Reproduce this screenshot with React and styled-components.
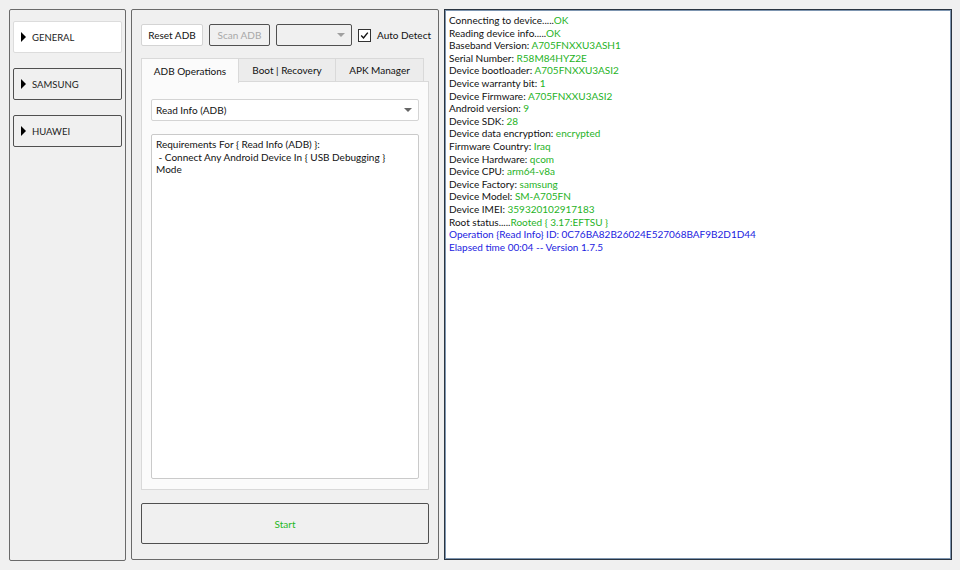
import React from "react";
import styled, { createGlobalStyle } from "styled-components";

const Global = createGlobalStyle`
  html, body { margin: 0; padding: 0; background: #f0f0f0; }
  body { font-family: Lato, "Noto Sans", sans-serif; font-size: 10px; color: #000; }
  * { box-sizing: border-box; }
`;

const Window = styled.div`
  width: 960px;
  height: 570px;
  padding: 9px;
  display: flex;
  gap: 5px;
  background: #f0f0f0;
`;

const SidePanel = styled.div`
  width: 117px;
  flex-shrink: 0;
  height: 552px;
  border: 1px solid #6a6a6a;
  border-radius: 2px;
  padding: 11px 3px 0 3px;
  display: flex;
  flex-direction: column;
  gap: 15px;
`;

const NavButton = styled.div`
  height: 32px;
  display: flex;
  align-items: center;
  gap: 6px;
  padding-left: 7px;
  border-radius: 2px;
  border: 1px solid ${(p) => (p.$active ? "#dcdcdc" : "#505050")};
  background: ${(p) => (p.$active ? "#ffffff" : "#f0f0f0")};
  font-size: 9.5px;
  color: #222;
`;

const Tri = styled.span`
  width: 0;
  height: 0;
  border-top: 5px solid transparent;
  border-bottom: 5px solid transparent;
  border-left: 5px solid #000;
`;

const MidPanel = styled.div`
  width: 308px;
  flex-shrink: 0;
  height: 551px;
  border: 1px solid #6a6a6a;
  border-radius: 2px;
  padding: 14px 9px 0 9px;
  display: flex;
  flex-direction: column;
`;

const Toolbar = styled.div`
  display: flex;
  align-items: center;
  gap: 6px;
  height: 22px;
`;

const ToolButton = styled.div`
  height: 22px;
  width: ${(p) => p.$w}px;
  flex-shrink: 0;
  display: flex;
  align-items: center;
  justify-content: center;
  border-radius: 2px;
  border: 1px solid ${(p) => (p.$disabled ? "#505050" : "#d4d4d4")};
  background: ${(p) => (p.$disabled ? "#f0f0f0" : "#ffffff")};
  color: ${(p) => (p.$disabled ? "#a8a8a8" : "#111")};
  white-space: nowrap;
`;

const Combo = styled.div`
  width: 76px;
  flex-shrink: 0;
  height: 22px;
  border: 1px solid #505050;
  border-radius: 2px;
  display: flex;
  align-items: center;
  justify-content: flex-end;
  padding-right: 6px;
`;

const Arrow = styled.span`
  width: 0;
  height: 0;
  border-left: 4px solid transparent;
  border-right: 4px solid transparent;
  border-top: 4px solid ${(p) => p.$c || "#666"};
`;

const Check = styled.label`
  display: flex;
  align-items: center;
  gap: 6px;
  color: #111;
  white-space: nowrap;
`;

const Box = styled.span`
  width: 13px;
  height: 13px;
  border: 1px solid #333;
  background: #fff;
  display: flex;
  align-items: center;
  justify-content: center;
`;

const Tabs = styled.div`
  display: flex;
  margin-top: 12px;
  height: 24px;
  position: relative;
  z-index: 1;
`;

const Tab = styled.div`
  width: ${(p) => p.$w}px;
  height: ${(p) => (p.$active ? 25 : 24)}px;
  display: flex;
  align-items: center;
  justify-content: center;
  border: 1px solid #d9d9d9;
  border-bottom: ${(p) => (p.$active ? "none" : "1px solid #d9d9d9")};
  margin-left: ${(p) => (p.$first ? 0 : -1)}px;
  background: ${(p) => (p.$active ? "#fbfbfb" : "#ececec")};
  color: #111;
  white-space: nowrap;
`;

const Pane = styled.div`
  width: 288px;
  height: 409px;
  margin-top: -1px;
  border: 1px solid #d9d9d9;
  background: #fbfbfb;
  padding: 17px 9px 10px 9px;
  display: flex;
  flex-direction: column;
  gap: 13px;
`;

const Select = styled.div`
  height: 22px;
  border: 1px solid #d4d4d4;
  border-radius: 2px;
  background: #fff;
  display: flex;
  align-items: center;
  justify-content: space-between;
  padding: 0 6px 0 4px;
  color: #111;
`;

const TextArea = styled.div`
  flex: 1;
  border: 1px solid #cacaca;
  border-radius: 2px;
  background: #fff;
  padding: 3px 4px;
  line-height: 12.6px;
  color: #111;
  white-space: pre-wrap;
`;

const StartButton = styled.div`
  margin-top: 13px;
  height: 41px;
  border: 1px solid #505050;
  border-radius: 2px;
  background: #f0f0f0;
  display: flex;
  align-items: center;
  justify-content: center;
  color: #1fb81f;
`;

const Log = styled.div`
  width: 508px;
  flex-shrink: 0;
  height: 551px;
  border: 1px solid #2a3440;
  box-shadow: inset 0 0 0 1px #7d95b0;
  background: #fff;
  padding: 4px 4px;
  line-height: 12.6px;
`;

const Line = styled.div`
  white-space: nowrap;
  color: ${(p) => (p.$blue ? "#1b1be0" : "#111")};
`;

const Val = styled.span`
  color: #1fb31f;
`;

const lines = [
  ["Connecting to device.....", "OK"],
  ["Reading device info.....", "OK"],
  ["Baseband Version: ", "A705FNXXU3ASH1"],
  ["Serial Number: ", "R58M84HYZ2E"],
  ["Device bootloader: ", "A705FNXXU3ASI2"],
  ["Device warranty bit: ", "1"],
  ["Device Firmware: ", "A705FNXXU3ASI2"],
  ["Android version: ", "9"],
  ["Device SDK: ", "28"],
  ["Device data encryption: ", "encrypted"],
  ["Firmware Country: ", "Iraq"],
  ["Device Hardware: ", "qcom"],
  ["Device CPU: ", "arm64-v8a"],
  ["Device Factory: ", "samsung"],
  ["Device Model: ", "SM-A705FN"],
  ["Device IMEI: ", "359320102917183"],
  ["Root status.....", "Rooted { 3.17:EFTSU }"],
];

export default function App() {
  return (
    <>
      <Global />
      <Window>
        <SidePanel>
          <NavButton $active><Tri />GENERAL</NavButton>
          <NavButton><Tri />SAMSUNG</NavButton>
          <NavButton><Tri />HUAWEI</NavButton>
        </SidePanel>
        <MidPanel>
          <Toolbar>
            <ToolButton $w={62}>Reset ADB</ToolButton>
            <ToolButton $w={61} $disabled>Scan ADB</ToolButton>
            <Combo><Arrow $c="#a0a0a0" /></Combo>
            <Check>
              <Box>
                <svg width="9" height="9" viewBox="0 0 9 9">
                  <path d="M1.2 4.6 L3.5 7 L7.8 1.6" fill="none" stroke="#111" strokeWidth="1.4" />
                </svg>
              </Box>
              Auto Detect
            </Check>
          </Toolbar>
          <Tabs>
            <Tab $w={98} $active $first>ADB Operations</Tab>
            <Tab $w={98}>Boot | Recovery</Tab>
            <Tab $w={89}>APK Manager</Tab>
          </Tabs>
          <Pane>
            <Select>Read Info (ADB)<Arrow /></Select>
            <TextArea>{"Requirements For { Read Info (ADB) }:\n - Connect Any Android Device In { USB Debugging }\nMode"}</TextArea>
          </Pane>
          <StartButton>Start</StartButton>
        </MidPanel>
        <Log>
          {lines.map(([k, v]) => (
            <Line key={k}>{k}<Val>{v}</Val></Line>
          ))}
          <Line $blue>Operation {"{Read Info}"} ID: 0C76BA82B26024E527068BAF9B2D1D44</Line>
          <Line $blue>Elapsed time 00:04 -- Version 1.7.5</Line>
        </Log>
      </Window>
    </>
  );
}
